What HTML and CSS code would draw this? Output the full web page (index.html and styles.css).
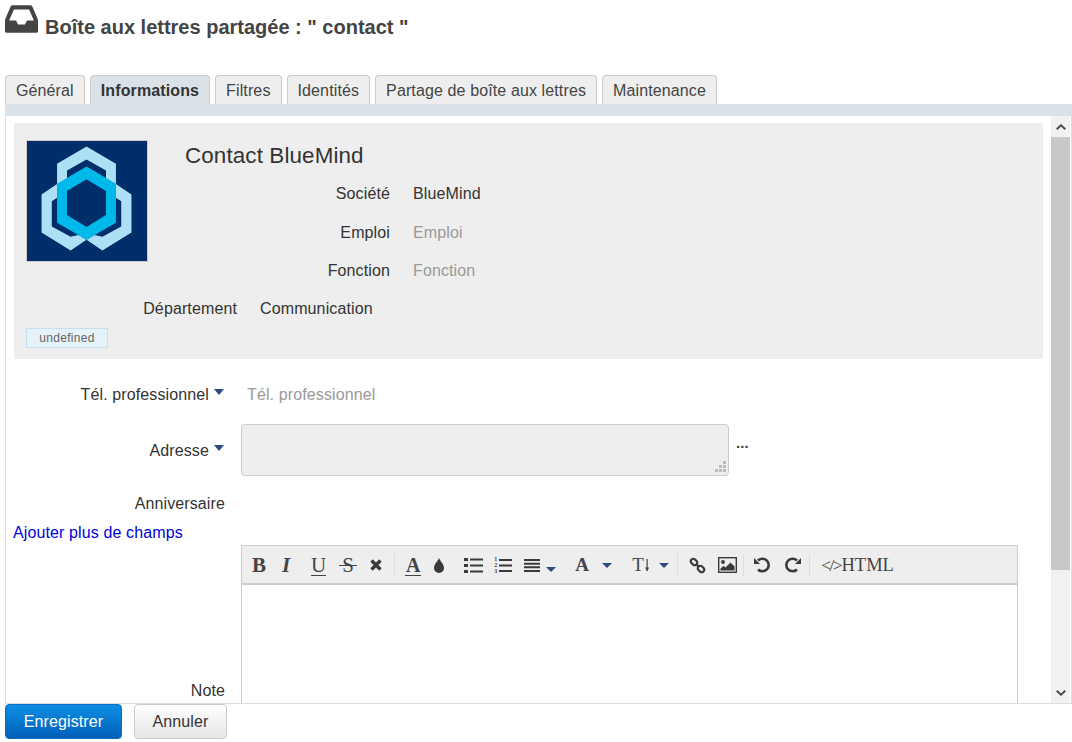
FILE: index.html
```html
<!DOCTYPE html>
<html lang="fr">
<head>
  <title>Boîte aux lettres partagée</title>
  <meta charset="utf-8">
  <link rel="stylesheet" href="styles.css">
</head>
<body>
  <h1 class="title">
    <svg class="title-icon" viewBox="128 256 1536 1280"><path d="M1151 960h316q-1-3-2.5-8.5t-2.5-7.5l-212-496h-708l-212 496q-1 3-2.5 8.5t-2.5 7.5h316l95 192h320zm513 30v482q0 26-19 45t-45 19h-1408q-26 0-45-19t-19-45v-482q0-62 25-123l238-552q10-25 36.5-42t52.5-17h832q26 0 52.5 17t36.5 42l238 552q25 61 25 123z"/></svg>
    <span class="title-text">Boîte aux lettres partagée : " contact "</span>
  </h1>

  <div class="tabs">
    <a class="tab">Général</a>
    <a class="tab active">Informations</a>
    <a class="tab">Filtres</a>
    <a class="tab">Identités</a>
    <a class="tab">Partage de boîte aux lettres</a>
    <a class="tab">Maintenance</a>
  </div>
  <div class="tabbar"></div>

  <div class="panel">
    <div class="content">
      <div class="card">
        <svg class="avatar" viewBox="49 46 363 363">
          <rect x="49" y="46" width="363" height="363" fill="#002e6b"/>
          <path fill="#aee0f5" d="M229 63L318 115V180H288V135L229 102L170 135V180H140V115Z"/>
          <path fill="#aee0f5" d="M140 176L93 208V323L181 377L229 345L205 330L181 336L124 305V228L140 218Z"/>
          <path fill="#aee0f5" d="M318 176L365 208V323L277 377L229 345L253 330L277 336L334 305V228L318 218Z"/>
          <path fill="#00b9eb" fill-rule="evenodd" d="M229 123L318 175V293L229 345L140 293V175ZM229 162L170 197V270L229 306L288 270V197Z"/>
        </svg>
        <h2 class="card-name">Contact BlueMind</h2>
        <div class="card-row first"><span class="card-label">Société</span><span class="card-value">BlueMind</span></div>
        <div class="card-row"><span class="card-label">Emploi</span><span class="card-value empty">Emploi</span></div>
        <div class="card-row"><span class="card-label">Fonction</span><span class="card-value empty">Fonction</span></div>
        <div class="card-row"><span class="card-label">Département</span><span class="card-value">Communication</span></div>
        <div class="tag">undefined</div>
      </div>

      <div class="row row-phone">
        <div class="label">Tél. professionnel<i class="caret"></i></div>
        <div class="empty field-text">Tél. professionnel</div>
      </div>

      <div class="row row-address">
        <div class="label">Adresse<i class="caret"></i></div>
        <div class="address-wrap">
          <div class="address">
            <svg class="grip" viewBox="0 0 12 12"><path fill="#bbb" d="M9 0h3v3H9zM9 4h3v3H9zM5 4h3v3H5zM9 8h3v3H9zM5 8h3v3H5zM1 8h3v3H1z"/></svg>
          </div>
          <span class="more">...</span>
        </div>
      </div>

      <div class="row row-birthday">
        <div class="label">Anniversaire</div>
        <div></div>
      </div>

      <a class="add-fields">Ajouter plus de champs</a>

      <div class="row row-note">
        <div class="label note-label">Note</div>
        <div class="editor">
          <div class="toolbar">
            <span class="tb tb-serif bold m10">B</span>
            <span class="tb tb-serif bold italic m16">I</span>
            <span class="tb tb-serif lined m19">U</span>
            <span class="tb tb-serif struck m13">S</span>
            <svg class="tb-icon m13" width="12" height="12" viewBox="0 0 12 12"><path fill="none" stroke="#3a3a3a" stroke-width="3.4" d="M1.5 1.5l9 9M10.5 1.5l-9 9"/></svg>
            <i class="sep m12"></i>
            <span class="tb tb-serif bold lined color-a m10">A</span>
            <svg class="tb-icon m13" width="10" height="15" viewBox="0 0 10 15"><path fill="#3a3a3a" d="M5 0C6 3 10 6 10 10A5 5 0 0 1 0 10C0 6 4 3 5 0Z"/></svg>
            <svg class="tb-icon m20" width="19" height="15" viewBox="0 0 19 15"><path fill="#3a3a3a" d="M0 0h4v3H0zM0 6h4v3H0zM0 12h4v3H0zM6 .5h13v2H6zM6 6.5h13v2H6zM6 12.5h13v2H6z"/></svg>
            <span class="ol-icon m11">
              <span class="ol-nums">1<br>2<br>3</span>
              <svg width="13" height="15" viewBox="0 0 13 15"><path fill="#3a3a3a" d="M0 1h13v2H0zM0 6.5h13v2H0zM0 12h13v2H0z"/></svg>
            </span>
            <svg class="tb-icon m12" width="16" height="13" viewBox="0 0 16 13"><path fill="#3a3a3a" d="M0 0h16v2H0zM0 3.7h16v2H0zM0 7.3h16v2H0zM0 11h16v2H0z"/></svg>
            <i class="tb-caret m6 low"></i>
            <span class="tb tb-serif bold bold-a m19">A</span>
            <i class="tb-caret m13"></i>
            <span class="tb tb-size m20">T<svg width="5" height="14" viewBox="0 0 5 14"><path fill="none" stroke="#444" stroke-width="1.4" d="M2.5 0V14"/><path fill="#444" d="M0 10h5l-2.500 4z"/></svg></span>
            <i class="tb-caret m10"></i>
            <i class="sep m8"></i>
            <svg class="tb-icon m11" width="17" height="17" viewBox="0 0 17 17"><g fill="none" stroke="#3a3a3a" stroke-width="2.200"><rect x="-3.500" y="-2.500" width="7" height="5" rx="2.500" transform="translate(5 5) rotate(40)"/><rect x="-3.500" y="-2.500" width="7" height="5" rx="2.500" transform="translate(12 12) rotate(40)"/><path d="M7 7l3 3"/></g></svg>
            <svg class="tb-icon m12" width="19" height="16" viewBox="0 0 19 16"><rect x=".7" y=".7" width="17.600" height="14.600" fill="none" stroke="#3a3a3a" stroke-width="1.400"/><circle cx="5" cy="5" r="1.900" fill="#3a3a3a"/><path fill="#3a3a3a" d="M2.500 13.500v-2l3-2.500 2 1.500 5-5 4 4v4z"/></svg>
            <i class="sep m6"></i>
            <svg class="tb-icon m10" width="17" height="16" viewBox="0 0 17 16"><path fill="none" stroke="#3a3a3a" stroke-width="2.600" d="M4 3.500A6.300 6.300 0 1 1 4 12.500"/><path fill="#3a3a3a" d="M0 1l6 6H0z"/></svg>
            <svg class="tb-icon m13" width="17" height="16" viewBox="0 0 17 16"><path fill="none" stroke="#3a3a3a" stroke-width="2.600" d="M13 3.500A6.300 6.300 0 1 0 13 12.500"/><path fill="#3a3a3a" d="M17 1l-6 6h6z"/></svg>
            <i class="sep m8"></i>
            <span class="tb-html m11"><small>&lt;/&gt;</small>HTML</span>
          </div>
        </div>
      </div>
    </div>

    <div class="scrollbar">
      <div class="scroll-btn">
        <svg width="10" height="6" viewBox="0 0 10 6"><path fill="none" stroke="#505050" stroke-width="2" d="M.7 5.300L5 1.300l4.300 4"/></svg>
      </div>
      <div class="scroll-thumb"></div>
      <div class="scroll-track"></div>
      <div class="scroll-btn">
        <svg width="10" height="6" viewBox="0 0 10 6"><path fill="none" stroke="#505050" stroke-width="2" d="M.7 .7L5 4.700l4.300-4"/></svg>
      </div>
    </div>
  </div>

  <div class="actions">
    <button class="btn btn-primary" type="button">Enregistrer</button>
    <button class="btn btn-default" type="button">Annuler</button>
  </div>
</body>
</html>
```

FILE: styles.css
```css
body {
  margin: 0;
  font-family: "Liberation Sans", Arial, sans-serif;
  font-size: 16px;
  letter-spacing: 0.12px;
  color: #333;
  background-color: #fff;
}

.title {
  display: flex;
  align-items: flex-start;
  gap: 7px;
  margin: 0;
  padding: 5px 0 36px 5px;
  font-size: 20px;
  letter-spacing: 0;
  color: #444;
}

.title-icon {
  width: 33px;
  height: 28px;
  fill: #444;
}

.title-text {
  margin-top: 11px;
  line-height: 23px;
}

/* tabs */
.tabs {
  display: flex;
  gap: 5px;
  padding-left: 5px;
}

.tab {
  height: 28px;
  padding: 0 10px;
  line-height: 29px;
  color: #444;
  background-color: #eee;
  border: 1px solid #ccc;
  border-bottom: none;
  border-radius: 4px 4px 0 0;
}

.tab.active {
  font-weight: bold;
  color: #333;
  background-color: #dae2e8;
}

.tabbar {
  height: 12px;
  margin-left: 5px;
  background-color: #dae2e8;
}

/* main panel */
.panel {
  display: flex;
  height: 587px;
  margin-left: 5px;
  border-left: 1px solid #ddd;
  border-right: 1px solid #ddd;
  border-bottom: 1px solid #ddd;
}

.content {
  flex: 1;
  min-width: 0;
  padding: 7px 8px 0 8px;
  overflow: hidden;
}

.card {
  height: 219px;
  padding: 17px 0 0 12px;
  background-color: #eee;
}

.avatar {
  float: left;
  width: 120px;
  height: 120px;
  margin-right: 31px;
  border: 1px solid #ccc;
}

.card-name {
  height: 35px;
  margin: 0;
  padding-left: 6px;
  overflow: hidden;
  font-size: 22.4px;
  font-weight: normal;
  line-height: 31px;
}

.card-row {
  display: flex;
  gap: 23px;
  height: 38px;
  padding-left: 7px;
  overflow: hidden;
  line-height: 38px;
}

.card-row.first {
  height: 39px;
}

.card-label {
  width: 204px;
  text-align: right;
}

.empty {
  color: #999;
}

.tag {
  clear: both;
  width: 80px;
  height: 18px;
  font-size: 12px;
  letter-spacing: 0.3px;
  line-height: 19px;
  text-align: center;
  color: #666;
  background-color: #e5f2f9;
  border: 1px solid #c5e0ee;
}

/* form rows */
.row {
  display: grid;
  grid-template-columns: 211px 1fr;
  column-gap: 16px;
  align-items: center;
}

.label {
  padding-top: 2px;
  text-align: right;
}

.note-label {
  padding-top: 0;
}

.caret {
  display: inline-block;
  margin: 0 1px 0 5px;
  border-top: 6px solid #2c4a7e;
  border-left: 5px solid transparent;
  border-right: 5px solid transparent;
  vertical-align: 5px;
}

.row-phone {
  height: 34px;
  margin-top: 18px;
}

.field-text {
  padding: 2px 0 0 6px;
}

.row-address {
  margin-top: 13px;
}

.address-wrap {
  display: flex;
  align-items: flex-start;
  gap: 7px;
}

.address {
  position: relative;
  width: 486px;
  height: 50px;
  background-color: #eee;
  border: 1px solid #ccc;
  border-radius: 4px;
}

.grip {
  position: absolute;
  right: 2px;
  bottom: 2px;
  width: 12px;
  height: 12px;
}

.more {
  margin-top: 9px;
  font-size: 15px;
  font-weight: bold;
  line-height: 20px;
  color: #444;
}

.row-birthday {
  height: 34px;
  margin-top: 10px;
}

.add-fields {
  display: block;
  margin: 4px 0 0 -1px;
  line-height: 18px;
  color: #0000e0;
}

.row-note {
  margin-top: 3px;
}

/* editor */
.editor {
  width: 775px;
  height: 290px;
  border: 1px solid #ccc;
  border-top: none;
}

.toolbar {
  display: flex;
  align-items: center;
  height: 36px;
  padding-top: 1px;
  background-color: #eee;
  border-top: 1px solid #ccc;
  border-bottom: 2px solid #ccc;
  color: #444;
}

.m6 { margin-left: 6px; }
.m8 { margin-left: 8px; }
.m10 { margin-left: 10px; }
.m11 { margin-left: 11px; }
.m12 { margin-left: 12px; }
.m13 { margin-left: 13px; }
.m16 { margin-left: 16px; }
.m19 { margin-left: 19px; }
.m20 { margin-left: 20px; }

.tb {
  display: inline-block;
  line-height: 22px;
}

.tb-serif {
  position: relative;
  font-family: "Liberation Serif", "Times New Roman", serif;
  font-size: 21px;
  letter-spacing: 0;
}

.bold {
  font-weight: bold;
}

.italic {
  width: 10px;
  font-style: italic;
}

.lined {
  border-bottom: 1.5px solid #444;
  line-height: 20px;
}

.color-a {
  width: 16px;
  font-size: 20px;
  text-align: center;
}

.struck {
  width: 18px;
  text-align: center;
}

.struck::after {
  content: "";
  position: absolute;
  left: 0;
  right: 0;
  top: 11px;
  height: 1px;
  background-color: #444;
}

.bold-a {
  width: 14px;
  font-size: 19px;
}

.tb-icon {
  flex: none;
}

.sep {
  width: 1px;
  height: 22px;
  background-color: #ddd;
}

.ol-icon {
  display: flex;
  align-items: center;
  gap: 1px;
}

.ol-nums {
  width: 4px;
  font-family: "Liberation Serif", serif;
  font-size: 6px;
  font-weight: bold;
  line-height: 6px;
}

.tb-caret {
  width: 0;
  border-top: 5px solid #2c4a7e;
  border-left: 5px solid transparent;
  border-right: 5px solid transparent;
}

.tb-caret.low {
  margin-top: 9px;
}

.tb-size {
  display: flex;
  align-items: center;
  gap: 1px;
  width: 17px;
  font-family: "Liberation Serif", serif;
  font-size: 19px;
}

.tb-html {
  font-family: "Liberation Serif", serif;
  font-size: 18.5px;
  letter-spacing: 0;
  white-space: nowrap;
}

.tb-html small {
  font-size: 17px;
  letter-spacing: -1.2px;
}

/* scrollbar */
.scrollbar {
  display: flex;
  flex-direction: column;
  flex: none;
  width: 19px;
  margin-right: 1px;
  background-color: #f1f1f1;
}

.scroll-btn {
  display: flex;
  align-items: center;
  justify-content: center;
  height: 21px;
}

.scroll-thumb {
  height: 433px;
  background-color: #c8c8c8;
}

.scroll-track {
  flex: 1;
}

/* buttons */
.actions {
  display: flex;
  gap: 12px;
  padding-left: 5px;
}

.btn {
  height: 35px;
  padding: 0;
  font-family: inherit;
  font-size: 16px;
  letter-spacing: inherit;
  border-radius: 4px;
}

.btn-primary {
  width: 117px;
  color: #fff;
  background: linear-gradient(#0c8fe4, #005fb8);
  border: 1px solid #0a6cc0;
}

.btn-default {
  width: 93px;
  color: #333;
  background: linear-gradient(#fff, #e6e6e6);
  border: 1px solid #ccc;
}
```
